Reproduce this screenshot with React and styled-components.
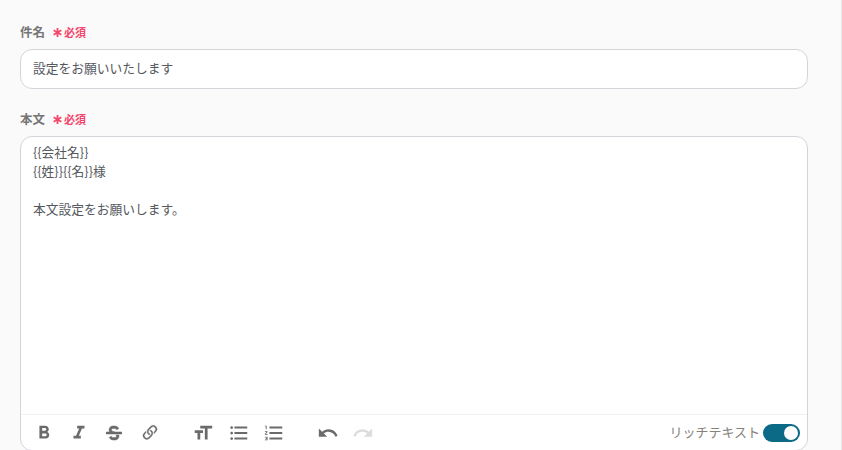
import React from "react";
import styled, { createGlobalStyle } from "styled-components";
import {
  MdFormatBold,
  MdFormatItalic,
  MdFormatSize,
  MdFormatListBulleted,
  MdFormatListNumbered,
  MdUndo,
  MdRedo,
} from "react-icons/md";
import { BsLink45Deg } from "react-icons/bs";
import { FaStrikethrough } from "react-icons/fa";

const GlobalStyle = createGlobalStyle`
  html, body {
    margin: 0;
    height: 100%;
    overflow: hidden;
  }
  body {
    background: #fafafa;
    font-family: "Noto Sans CJK JP", "Noto Sans", sans-serif;
  }
`;

const Page = styled.div`
  box-sizing: border-box;
  width: 842px;
  height: 450px;
  overflow: hidden;
  padding: 23px 33px 0 20px;
  background: #fafafa;
  border-right: 1px solid #e8e8e8;
`;

const Field = styled.div`
  margin-bottom: 21px;
`;

const LabelRow = styled.div`
  display: flex;
  align-items: center;
  height: 17px;
  margin-bottom: 9px;
`;

const Label = styled.span`
  font-size: 12.5px;
  font-weight: 700;
  color: #757575;
`;

const Required = styled.span`
  display: flex;
  align-items: center;
  margin-left: 8px;
  font-size: 11px;
  font-weight: 700;
  color: #f5466e;
`;

const Star = styled.svg`
  width: 9px;
  height: 9px;
  margin: 2px 2px 0 0;
  stroke: #f5466e;
  stroke-width: 2;
`;

const Input = styled.div`
  box-sizing: border-box;
  height: 40px;
  padding: 0 12px 3px;
  display: flex;
  align-items: center;
  background: #fff;
  border: 1px solid #d3d5db;
  border-radius: 12px;
  font-size: 12.75px;
  color: #55585e;
`;

const Editor = styled.div`
  box-sizing: border-box;
  height: 315px;
  display: flex;
  flex-direction: column;
  background: #fff;
  border: 1px solid #d3d5db;
  border-radius: 12px;
`;

const Body = styled.div`
  flex: 1;
  padding: 5px 12px;
  font-size: 12.75px;
  line-height: 19px;
  color: #55585e;
  white-space: pre-wrap;
`;

const Toolbar = styled.div`
  height: 35px;
  display: flex;
  align-items: center;
  padding: 0 7px 0 5px;
  border-top: 1px solid #f1f1f3;
`;

const Tool = styled.span`
  width: 35.4px;
  height: 22px;
  display: flex;
  align-items: center;
  justify-content: center;
  font-size: ${(p) => p.$size || 22}px;
  color: ${(p) => (p.$disabled ? "#dcdcdc" : "#6b6b6b")};
  margin-left: ${(p) => p.$gap || 0}px;
`;

const Rich = styled.div`
  margin-left: auto;
  display: flex;
  align-items: center;
  gap: 3px;
  font-size: 13px;
  color: #87817c;
`;

const RichLabel = styled.span`
  margin-top: -3px;
`;

const Switch = styled.span`
  box-sizing: border-box;
  width: 37px;
  height: 18px;
  padding: 2px;
  display: flex;
  justify-content: flex-end;
  background: #0b6a85;
  border-radius: 9px;
`;

const Knob = styled.span`
  width: 14px;
  height: 14px;
  background: #fff;
  border-radius: 50%;
`;

function RequiredMark() {
  return (
    <Required>
      <Star viewBox="0 0 10 10">
        <path d="M5 0v10M0.7 2.5l8.6 5M0.7 7.5l8.6-5" />
      </Star>
      必須
    </Required>
  );
}

export default function App() {
  return (
    <>
      <GlobalStyle />
      <Page>
        <Field>
          <LabelRow>
            <Label>件名</Label>
            <RequiredMark />
          </LabelRow>
          <Input>設定をお願いいたします</Input>
        </Field>
        <Field>
          <LabelRow>
            <Label>本文</Label>
            <RequiredMark />
          </LabelRow>
          <Editor>
            <Body>{"{{会社名}}\n{{姓}}{{名}}様\n\n本文設定をお願いします。"}</Body>
            <Toolbar>
              <Tool><MdFormatBold /></Tool>
              <Tool><MdFormatItalic /></Tool>
              <Tool $size={16}><FaStrikethrough stroke="currentColor" strokeWidth={16} /></Tool>
              <Tool $size={20}><BsLink45Deg stroke="currentColor" strokeWidth={0.3} /></Tool>
              <Tool $gap={18}><MdFormatSize /></Tool>
              <Tool><MdFormatListBulleted /></Tool>
              <Tool><MdFormatListNumbered /></Tool>
              <Tool $gap={19}><MdUndo /></Tool>
              <Tool $gap={-1} $disabled><MdRedo /></Tool>
              <Rich>
                <RichLabel>リッチテキスト</RichLabel>
                <Switch><Knob /></Switch>
              </Rich>
            </Toolbar>
          </Editor>
        </Field>
      </Page>
    </>
  );
}
